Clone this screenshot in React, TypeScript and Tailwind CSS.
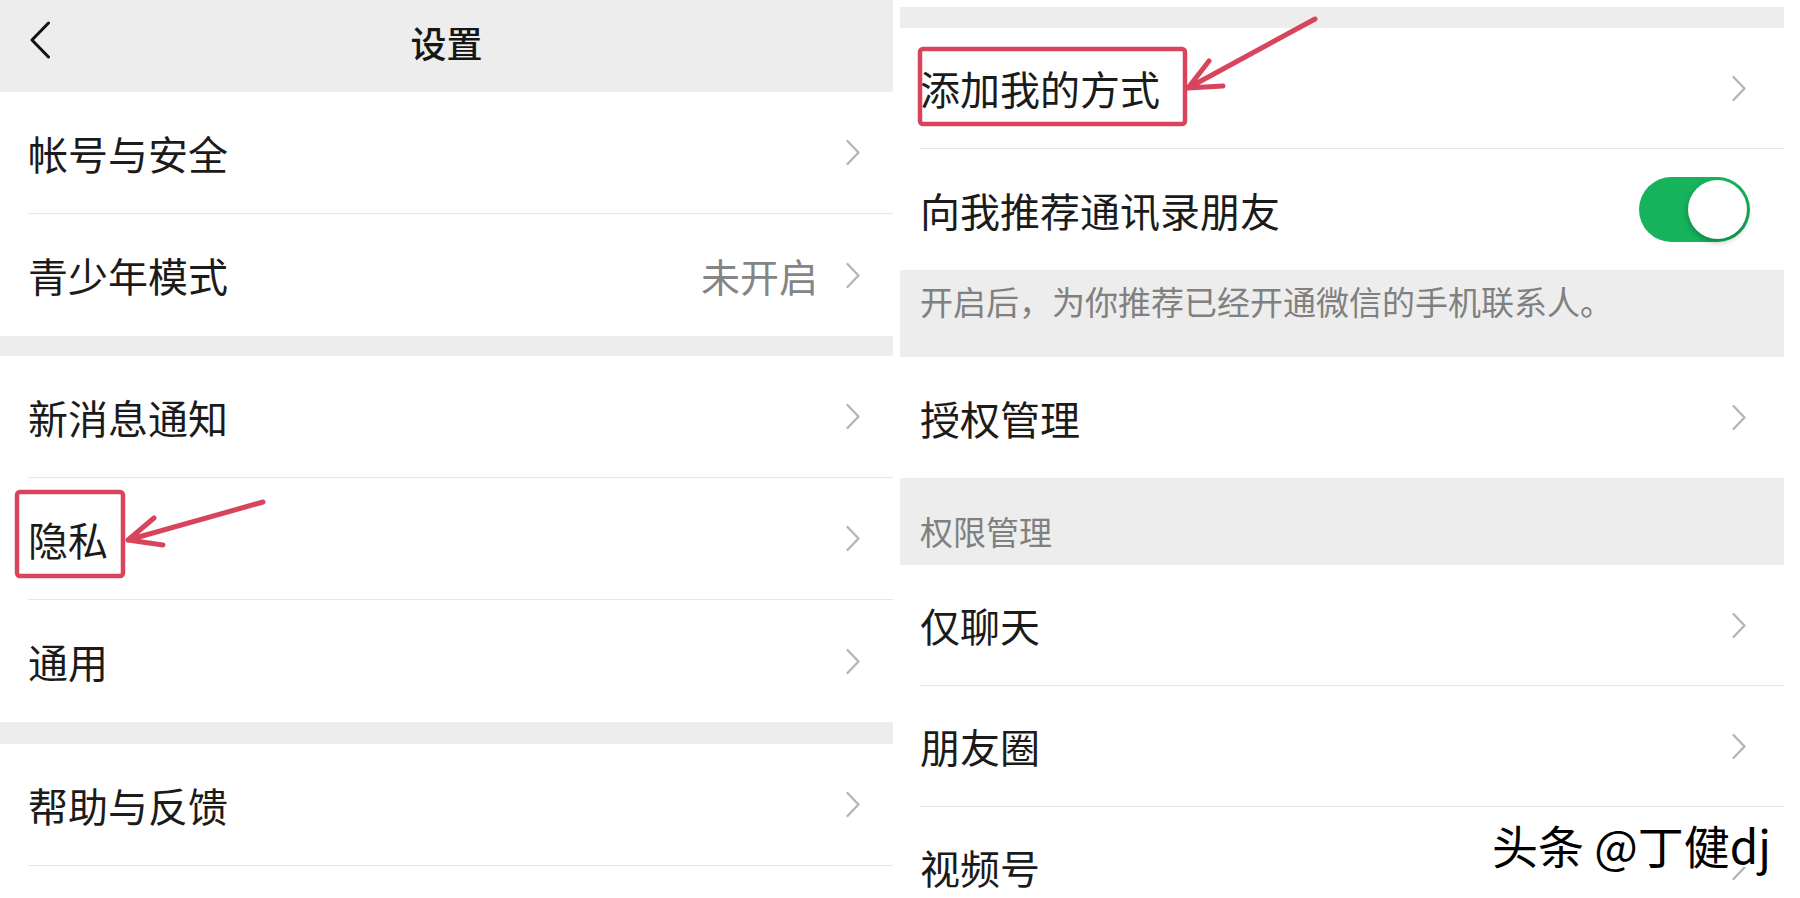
import React from "react";

const FONT = "font-['Noto_Sans_CJK_SC','Noto_Sans',sans-serif]";

function Chevron() {
  return (
    <svg width="16" height="27" viewBox="0 0 16 27" fill="none" className="shrink-0">
      <path d="M2.5 2 L13.5 13.5 L2.5 25" stroke="#b5b5b5" strokeWidth="2.4" strokeLinecap="round" strokeLinejoin="round" />
    </svg>
  );
}

function LeftRow({ label, value, sep = true }: { label: string; value?: string; sep?: boolean }) {
  return (
    <div className="shrink-0 bg-white pl-[28px]">
      <div className={`h-[122px] flex items-center pr-[32px] ${sep ? "border-b border-[#e6e6e6]" : ""}`}>
        <span className="text-[40px] leading-none text-[#1b1b1b]">{label}</span>
        <div className="ml-auto flex items-center">
          {value && <span className="text-[39px] leading-none text-[#858585] mr-[27px]">{value}</span>}
          <Chevron />
        </div>
      </div>
    </div>
  );
}

function RightRow({ label, sep = true, toggle = false }: { label: string; sep?: boolean; toggle?: boolean }) {
  return (
    <div className="shrink-0 bg-white pl-[20px]">
      <div className={`h-[121px] flex items-center ${toggle ? "pr-[34px]" : "pr-[37px]"} ${sep ? "border-b border-[#e6e6e6]" : ""}`}>
        <span className="text-[40px] leading-none text-[#1b1b1b]">{label}</span>
        <div className="ml-auto flex items-center">
          {toggle ? (
            <div className="w-[111px] h-[65px] rounded-full bg-[#16b35c] flex items-center justify-end p-[3px]">
              <div className="w-[59px] h-[59px] rounded-full bg-white shadow-[0_3px_6px_rgba(0,0,0,0.28)]" />
            </div>
          ) : (
            <Chevron />
          )}
        </div>
      </div>
    </div>
  );
}

export default function App() {
  return (
    <div className={`relative w-[1800px] h-[898px] overflow-hidden bg-white flex items-start ${FONT}`}>
      {/* 左：设置 */}
      <div className="w-[893px] shrink-0 flex flex-col">
        <div className="shrink-0 h-[92px] bg-[#ededed] relative flex items-center justify-center pb-[8px]">
          <svg width="22" height="38" viewBox="0 0 22 38" fill="none" className="absolute left-[29px] top-[21px]">
            <path d="M19.5 2 L3 19 L19.5 36" stroke="#111" strokeWidth="3" strokeLinecap="round" strokeLinejoin="round" />
          </svg>
          <span className="text-[36px] leading-none font-medium text-[#161616]">设置</span>
        </div>
        <LeftRow label="帐号与安全" />
        <LeftRow label="青少年模式" value="未开启" sep={false} />
        <div className="shrink-0 h-[20px] bg-[#ededed]" />
        <LeftRow label="新消息通知" />
        <LeftRow label="隐私" />
        <LeftRow label="通用" sep={false} />
        <div className="shrink-0 h-[22px] bg-[#ededed]" />
        <LeftRow label="帮助与反馈" />
      </div>

      {/* 右：隐私 */}
      <div className="ml-[7px] w-[884px] shrink-0 flex flex-col pt-[7px]">
        <div className="shrink-0 h-[21px] bg-[#ededed]" />
        <RightRow label="添加我的方式" />
        <RightRow label="向我推荐通讯录朋友" toggle sep={false} />
        <div className="shrink-0 h-[87px] bg-[#ededed] pl-[20px] pt-[15px]">
          <p className="text-[33px] leading-none text-[#808080]">开启后，为你推荐已经开通微信的手机联系人。</p>
        </div>
        <RightRow label="授权管理" sep={false} />
        <div className="shrink-0 h-[87px] bg-[#ededed] pl-[20px] pt-[37px]">
          <p className="text-[33px] leading-none text-[#808080]">权限管理</p>
        </div>
        <RightRow label="仅聊天" />
        <RightRow label="朋友圈" />
        <RightRow label="视频号" />
      </div>

      {/* 标注 */}
      <svg className="absolute left-0 top-0 pointer-events-none" width="1800" height="898" viewBox="0 0 1800 898" fill="none">
        <g stroke="#d8445c" strokeLinecap="round" strokeLinejoin="round">
          <rect x="17" y="492" width="106" height="84" rx="3" strokeWidth="4.5" />
          <path d="M263 502 L128 540 M128 540 L154 518 M128 540 L163 545" strokeWidth="5" />
          <rect x="920" y="49" width="265" height="75" rx="3" strokeWidth="4.5" />
          <path d="M1315 19 L1188 88 M1188 88 L1209 61 M1188 88 L1223 86" strokeWidth="5" />
        </g>
      </svg>

      <div className="absolute left-[1492px] top-[821px] text-[46px] leading-none text-black whitespace-nowrap [text-shadow:2px_2px_0_#fff,-1px_-1px_0_#fff]">
        头条 @丁健dj
      </div>
    </div>
  );
}
